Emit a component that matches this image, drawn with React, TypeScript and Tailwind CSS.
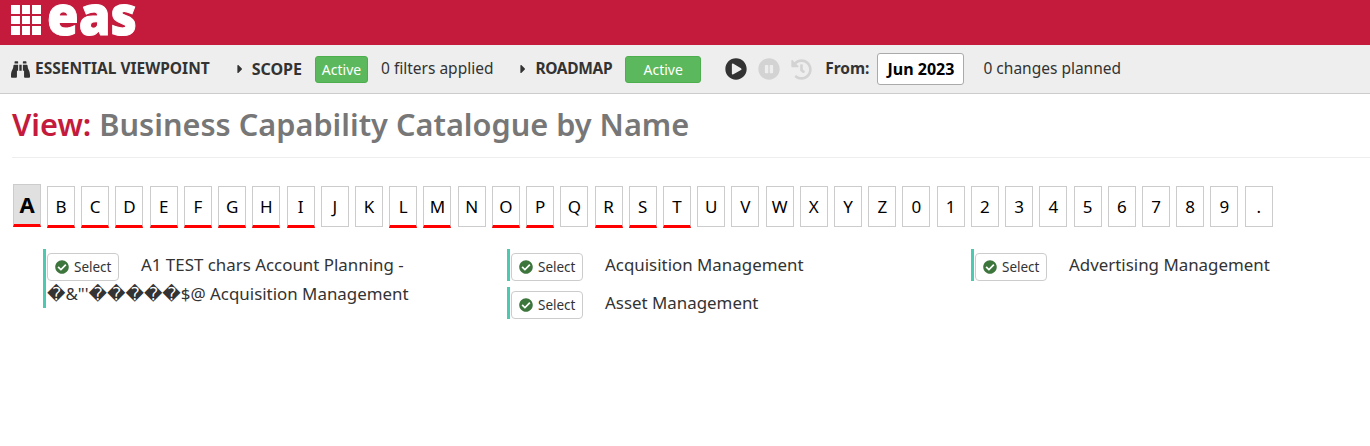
import { FaBinoculars, FaCaretRight, FaCheckCircle, FaHistory, FaPauseCircle, FaPlayCircle } from "react-icons/fa";

const letters = "ABCDEFGHIJKLMNOPQRSTUVWXYZ0123456789.".split("");
const withItems = "BCDEFGHILMOPRST".split("");

function Logo() {
  return (
    <div className="flex items-start">
      <div className="grid grid-cols-3 gap-[2px] w-[30px] h-[30px] mt-[5px]">
        {Array.from({ length: 9 }).map((_, i) => (
          <div key={i} className="bg-white" />
        ))}
      </div>
      <svg width="96" height="45" className="ml-[5px]">
        <text
          x="1"
          y="35"
          fontFamily="Open Sans, sans-serif"
          fontSize="55"
          fontWeight="800"
          fill="white"
          stroke="white"
          strokeWidth="1"
          textLength="90"
          lengthAdjust="spacingAndGlyphs"
        >
          eas
        </text>
      </svg>
    </div>
  );
}

function Letter({ ch }: { ch: string }) {
  if (ch === "A") {
    return (
      <div className="w-[28px] h-[43px] bg-[#e0e0e0] border border-[#ccc] border-b-[3px] border-b-[#f00] flex items-center justify-center text-[22px] font-bold text-black mr-[6px] mb-[2px]">
        A
      </div>
    );
  }
  const active = withItems.includes(ch);
  return (
    <div
      className={`w-[28px] border border-[#ccc] flex items-center justify-center pt-[1px] text-[17px] text-black mr-[6.23px] mt-[2px] ${
        active ? "h-[42px] border-b-[3px] border-b-[#f00]" : "h-[41px]"
      }`}
    >
      {ch}
    </div>
  );
}

function Item({ children }: { children: React.ReactNode }) {
  return (
    <div className="border-l-[3px] border-[#4cc9b0] pl-[1px] pt-[1px] w-[370px] min-h-[32px] text-[16.9px] leading-[29px] text-[#333] mb-[6px]">
      <span className="float-left flex items-center gap-[5px] w-[72px] h-[28px] mt-[3px] -mb-[3px] mr-[22px] border border-[#ccc] rounded-[4px] bg-white pl-[7px] text-[13.5px] text-[#333]">
        <FaCheckCircle className="text-[#3c763d] text-[14px]" />
        Select
      </span>
      {children}
    </div>
  );
}

export default function App() {
  return (
    <div className="font-['Noto_Sans',sans-serif] bg-white min-h-[446px] text-[#333]">
      <div className="h-[45px] bg-[#c41a3c] pl-[11px]">
        <Logo />
      </div>
      <div className="h-[49px] bg-[#eee] border-b border-[#ccc] flex items-center pl-[11px] text-[15.5px]">
        <FaBinoculars className="text-[#333] text-[19px]" />
        <span className="font-bold ml-[5px] text-[15.5px]">ESSENTIAL VIEWPOINT</span>
        <FaCaretRight className="ml-[23px] text-[14px]" />
        <span className="font-bold ml-[5px] text-[16px]">SCOPE</span>
        <span className="ml-[13px] w-[53px] h-[27px] rounded-[3px] bg-[#5cb85c] border border-[#4cae4c] text-white text-[14px] flex items-center justify-center">
          Active
        </span>
        <span className="ml-[13px]">0 filters applied</span>
        <FaCaretRight className="ml-[23px] text-[14px]" />
        <span className="font-bold ml-[5px] text-[15.5px] tracking-[-0.35px]">ROADMAP</span>
        <span className="ml-[13px] w-[76px] h-[27px] rounded-[3px] bg-[#5cb85c] border border-[#4cae4c] text-white text-[14px] flex items-center justify-center">
          Active
        </span>
        <FaPlayCircle className="ml-[24px] text-[22px] text-[#333]" />
        <FaPauseCircle className="ml-[11px] text-[22px] text-[#d3d3d3]" />
        <FaHistory className="ml-[11px] text-[21px] text-[#d3d3d3]" />
        <span className="font-bold ml-[13px] text-[15.5px]">From:</span>
        <div className="ml-[8px] w-[87px] h-[32px] bg-white border border-[#aaa] rounded-[3px] flex items-center justify-center font-bold text-[16px] text-black">
          Jun 2023
        </div>
        <span className="ml-[19px]">0 changes planned</span>
      </div>
      <div className="ml-[12px] h-[64px] border-b border-[#eee] pt-[10px] text-[30.7px] leading-[40px] font-semibold text-[#777]">
        <span className="text-[#c41a3c]">View:</span> Business Capability Catalogue by Name
      </div>
      <div className="flex items-start pl-[13px] mt-[26px]">
        {letters.map((ch) => (
          <Letter key={ch} ch={ch} />
        ))}
      </div>
      <div className="grid grid-cols-[464px_464px_1fr] pl-[43px] mt-[20px]">
        <div>
          <Item>
            A1 TEST chars Account Planning - <span className="font-['DejaVu_Sans',sans-serif] text-[18px]">�</span>&amp;&quot;&#39;
            <span className="font-['DejaVu_Sans',sans-serif] text-[18px]">�����</span>$@ Acquisition Management
          </Item>
        </div>
        <div>
          <Item>Acquisition Management</Item>
          <Item>Asset Management</Item>
        </div>
        <div>
          <Item>Advertising Management</Item>
        </div>
      </div>
    </div>
  );
}
